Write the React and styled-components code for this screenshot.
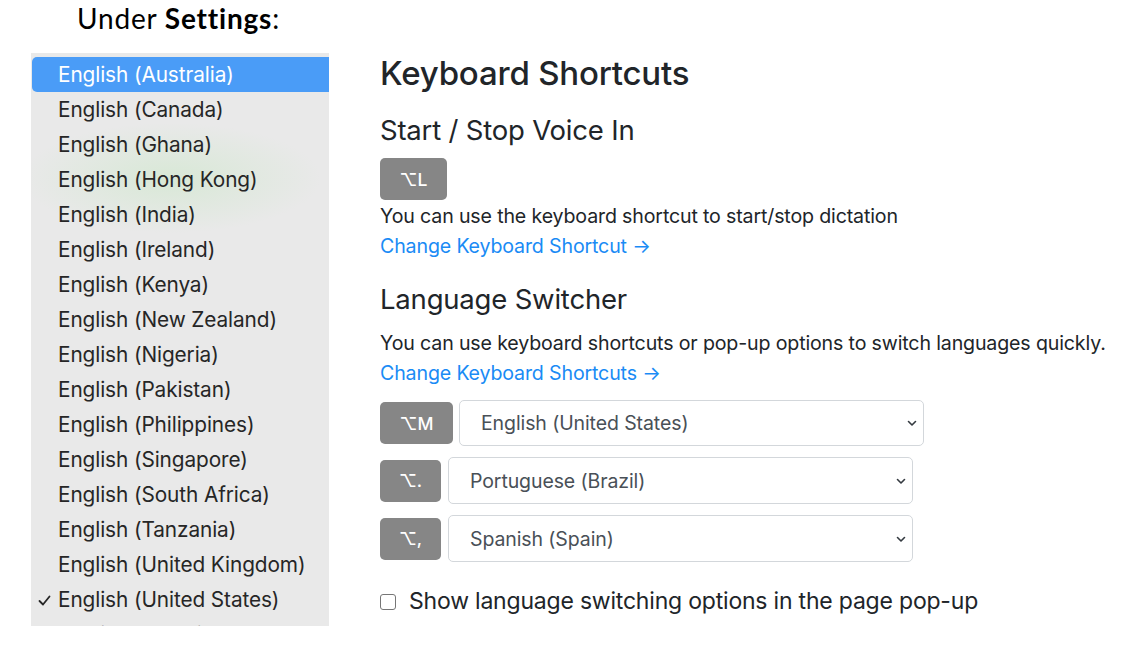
import React from 'react';
import styled, { createGlobalStyle } from 'styled-components';

const GlobalStyle = createGlobalStyle`
  html, body {
    margin: 0;
    padding: 0;
    background: #ffffff;
  }
  body {
    font-family: Inter, "Liberation Sans", sans-serif;
    color: #212529;
  }
`;

const Page = styled.div`
  width: 1135px;
  height: 646px;
  overflow: hidden;
`;

const Caption = styled.div`
  font-family: Lato, "Open Sans", sans-serif;
  font-size: 28px;
  line-height: 32px;
  letter-spacing: 0.8px;
  color: #000;
  padding: 2px 0 0 77px;
  height: 53px;
  box-sizing: border-box;
  b {
    font-weight: 700;
  }
`;

const Columns = styled.div`
  display: flex;
  align-items: flex-start;
`;

const Menu = styled.div`
  margin-left: 31px;
  width: 298px;
  height: 573px;
  overflow: hidden;
  padding-top: 4px;
  box-sizing: border-box;
  background-color: #e9e9e9;
  background-image: radial-gradient(
    ellipse 150px 55px at 140px 125px,
    rgba(214, 232, 212, 0.9),
    rgba(233, 233, 233, 0)
  );
`;

const MenuItem = styled.div`
  display: flex;
  align-items: center;
  height: 35px;
  padding-left: 26px;
  position: relative;
  font-size: 20.8px;
  letter-spacing: -0.1px;
  color: ${p => (p.$active ? '#ffffff' : '#262626')};
  background: ${p => (p.$active ? '#4a9cf7' : 'transparent')};
  border-radius: ${p => (p.$active ? '5px 0 0 5px' : '0')};
  margin-left: 1px;
  white-space: nowrap;
`;

const Check = styled.span`
  position: absolute;
  left: 6px;
  top: 12px;
  display: flex;
`;

const Content = styled.div`
  margin-left: 51px;
  display: flex;
  flex-direction: column;
  align-items: flex-start;
`;

const Title = styled.h1`
  margin: 1px 0 0 0;
  font-size: 33px;
  font-weight: 500;
  line-height: 38px;
  letter-spacing: -0.2px;
  color: #212529;
`;

const Subtitle = styled.h2`
  margin: ${p => p.$top || '0'} 0 0 0;
  font-size: 27.5px;
  font-weight: 400;
  line-height: 34px;
  letter-spacing: -0.2px;
  color: #212529;
`;

const Key = styled.div`
  display: inline-flex;
  align-items: center;
  justify-content: center;
  box-sizing: border-box;
  height: 42px;
  min-width: ${p => p.$w || 61}px;
  margin-top: ${p => p.$top || '0'};
  padding: 0 16px;
  background: #868686;
  color: #ffffff;
  border-radius: 5px;
  font-size: 17.5px;
  font-weight: 500;
`;

const Text = styled.p`
  margin: ${p => p.$top || '0'} 0 0 0;
  font-size: 19.6px;
  line-height: 30px;
  letter-spacing: -0.15px;
  color: #212529;
  white-space: nowrap;
`;

const LinkText = styled.a`
  display: block;
  font-size: 19.6px;
  line-height: 30px;
  letter-spacing: -0.15px;
  color: #1a8bf5;
  text-decoration: none;
`;

const Rows = styled.div`
  display: flex;
  flex-direction: column;
  gap: 11px;
  margin-top: 12px;
`;

const Row = styled.div`
  display: flex;
  align-items: center;
  gap: ${p => p.$gap || 7}px;
`;

const SelectWrap = styled.div`
  position: relative;
  width: ${p => p.$w}px;
`;

const Select = styled.select`
  appearance: none;
  -webkit-appearance: none;
  display: block;
  width: 100%;
  height: ${p => p.$h || 47}px;
  box-sizing: border-box;
  border: 1px solid #d3d7db;
  border-radius: 5px;
  background: #ffffff;
  padding: 0 30px 0 21px;
  font-family: Inter, "Liberation Sans", sans-serif;
  font-size: 19.5px;
  letter-spacing: -0.1px;
  color: #495057;
  outline: none;
`;

const Chevron = styled.svg`
  position: absolute;
  right: 7px;
  top: 50%;
  transform: translateY(-50%);
  pointer-events: none;
`;

const CheckRow = styled.label`
  display: flex;
  align-items: center;
  gap: 13px;
  margin-top: 24px;
  height: 30px;
  font-size: 23px;
  letter-spacing: -0.2px;
  color: #212529;
`;

const Box = styled.span`
  width: 14px;
  height: 14px;
  border: 1px solid #767676;
  border-radius: 3px;
  background: #fff;
  margin-top: 1px;
`;

const languages = [
  'English (Australia)',
  'English (Canada)',
  'English (Ghana)',
  'English (Hong Kong)',
  'English (India)',
  'English (Ireland)',
  'English (Kenya)',
  'English (New Zealand)',
  'English (Nigeria)',
  'English (Pakistan)',
  'English (Philippines)',
  'English (Singapore)',
  'English (South Africa)',
  'English (Tanzania)',
  'English (United Kingdom)',
  'English (United States)',
  'English (Zambia)',
];

const switchers = [
  { key: '⌥M', value: 'English (United States)', keyW: 73, selW: 465, gap: 6, h: 46 },
  { key: '⌥.', value: 'Portuguese (Brazil)', keyW: 61, selW: 465, gap: 7, h: 47 },
  { key: '⌥,', value: 'Spanish (Spain)', keyW: 61, selW: 465, gap: 7, h: 47 },
];

export default function App() {
  return (
    <Page>
      <GlobalStyle />
      <Caption>
        Under <b>Settings</b>:
      </Caption>
      <Columns>
        <Menu>
          {languages.map((lang, i) => (
            <MenuItem key={lang} $active={i === 0}>
              {lang === 'English (United States)' && (
                <Check>
                  <svg width="13" height="13" viewBox="0 0 13 13">
                    <path d="M1.5 7 L5 10.5 L11.5 2.5" fill="none" stroke="#262626" strokeWidth="1.8" strokeLinecap="round" strokeLinejoin="round" />
                  </svg>
                </Check>
              )}
              {lang}
            </MenuItem>
          ))}
        </Menu>
        <Content>
          <Title>Keyboard Shortcuts</Title>
          <Subtitle $top="21px">Start / Stop Voice In</Subtitle>
          <Key $w={67} $top="11px">⌥L</Key>
          <Text $top="1px">You can use the keyboard shortcut to start/stop dictation</Text>
          <LinkText href="#">Change Keyboard Shortcut →</LinkText>
          <Subtitle $top="21px">Language Switcher</Subtitle>
          <Text $top="12px">You can use keyboard shortcuts or pop-up options to switch languages quickly.</Text>
          <LinkText href="#">Change Keyboard Shortcuts →</LinkText>
          <Rows>
            {switchers.map(s => (
              <Row key={s.key} $gap={s.gap}>
                <Key $w={s.keyW}>{s.key}</Key>
                <SelectWrap $w={s.selW}>
                  <Select $h={s.h} defaultValue={s.value}>
                    <option>{s.value}</option>
                  </Select>
                  <Chevron width="10" height="8" viewBox="0 0 10 8">
                    <path d="M1.5 2.5 L5 6 L8.5 2.5" fill="none" stroke="#343a40" strokeWidth="1.6" strokeLinecap="round" strokeLinejoin="round" />
                  </Chevron>
                </SelectWrap>
              </Row>
            ))}
          </Rows>
          <CheckRow>
            <Box />
            Show language switching options in the page pop-up
          </CheckRow>
        </Content>
      </Columns>
    </Page>
  );
}
